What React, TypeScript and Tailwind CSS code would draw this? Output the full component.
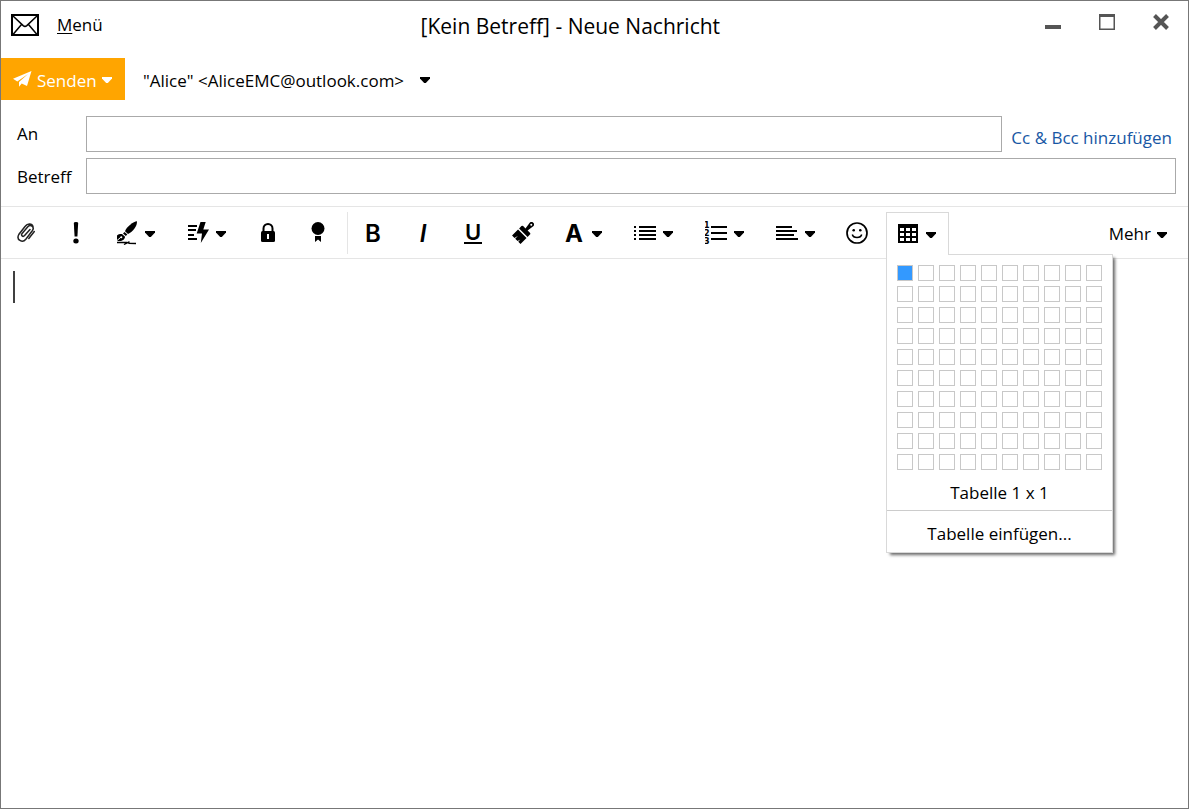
import { useState } from "react";
import type { ReactNode } from "react";

const GRID_SIZE = 10;

function Caret() {
	return (
		<svg width="10" height="6" viewBox="0 0 10 6" fill="currentColor" className="mt-0.5 shrink-0">
			<path d="M0 0h10v1.4L5.8 6H4.2L0 1.4z" />
		</svg>
	);
}

function MailIcon() {
	return (
		<svg width="28" height="22" viewBox="0 0 28 22" fill="none" stroke="currentColor">
			<rect x="1" y="1" width="26" height="20" strokeWidth="2" />
			<path d="M2 2l10.2 9.6q1.8 1.6 3.6 0L26 2M2 20.500l8.500-10M26 20.500l-8.500-10" strokeWidth="1.500" />
		</svg>
	);
}

function SendIcon() {
	return (
		<svg width="19" height="16" viewBox="0 0 19 16" fill="currentColor">
			<path d="M18.500 0L0 7.800l4.300 2.700L15 3 6 11v4.800l2.700-3.300 5.300 2.500z" />
		</svg>
	);
}

function ClipIcon() {
	return (
		<svg width="20" height="22" viewBox="0 0 20 22" fill="none" stroke="#222" strokeWidth="1.500" strokeLinecap="round">
			<path d="M14 7.500l-5.400 6c-1.800 2-4-.2-2.500-2l5.700-6.800c2.700-3 7.200.2 4.500 4l-6.500 8.500c-3.300 4.100-9.900.8-7-4.700L9.200 4.200C11.500 1 16 1.300 17 4.500" />
			<path d="M18.300 9.500l-5.500 7" />
		</svg>
	);
}

function PriorityIcon() {
	return (
		<svg width="8" height="22" viewBox="0 0 8 22" fill="currentColor">
			<path d="M1.800 1Q1.800 0 4 0t2.200 1L5.400 14.500H2.600z" />
			<ellipse cx="4" cy="19" rx="2.700" ry="2.500" />
		</svg>
	);
}

function SignatureIcon() {
	return (
		<svg width="22" height="24" viewBox="0 0 22 24" fill="currentColor">
			<path d="M21 .3C17.500.3 10.500 6 9 10.200l3 2.800C17 11 21.300 5 21 .3z" />
			<path d="M8.500 11l2.800 2.600-1.500 1.500L7 12.500z" />
			<path d="M6.300 13.200l2.800 2.600c-.3 2-1.800 3.700-4 4.200H1v-5.500c1.500-1.100 3.300-1.600 5.300-1.300z" />
			<path d="M1 19.500l3.800-3.200" stroke="#fff" strokeWidth="1" />
			<circle cx="5.300" cy="16.300" r="1" fill="#fff" />
			<path d="M1 21.500h9l-.8 1.300 3.600-1.800.2 1.300 7 .2" fill="none" stroke="currentColor" strokeWidth="1.400" />
		</svg>
	);
}

function TemplateIcon() {
	return (
		<svg width="22" height="22" viewBox="0 0 22 22" fill="currentColor">
			<path d="M1 3h9v2H1zM1 7h8v2H1zM1 12h6v2H1zM1 16h9v2H1z" />
			<path d="M13.500 0h5.200l-2.400 7.500H22L13.800 21l1.200-9.500H9.700z" />
		</svg>
	);
}

function LockIcon() {
	return (
		<svg width="14" height="19" viewBox="0 0 14 19">
			<path d="M2.500 9V5.500a4.500 4.500 0 0 1 9 0V9" fill="none" stroke="currentColor" strokeWidth="2" />
			<rect y="8" width="14" height="11" rx="1.500" fill="currentColor" />
			<path d="M6 11h2v5H6z" fill="#fff" />
		</svg>
	);
}

function BadgeIcon() {
	return (
		<svg width="14" height="22" viewBox="0 0 14 22" fill="currentColor">
			<circle cx="7" cy="6.500" r="6.500" />
			<path d="M4 14h6v6l-3-2.500L4 20z" />
		</svg>
	);
}

function BrushIcon() {
	return (
		<svg width="22" height="22" viewBox="0 0 22 22">
			<g transform="rotate(45 11 11)" fill="currentColor">
				<path d="M8.500-1Q8.500-3.500 11-3.500t2.500 2.500L12.500 6h3.300q1.200 0 1.200 1.200v3.300H5V7.200Q5 6 6.200 6h3.300z" />
				<path d="M5 12h12v8.500h-3.200v-3l-1 3H9.500v-4l-1 4H5z" />
				<circle cx="11" cy="-.7" r="1" fill="#fff" />
			</g>
		</svg>
	);
}

function BulletListIcon() {
	return (
		<svg width="22" height="14" viewBox="0 0 22 14" fill="currentColor">
			<path d="M0 0h2v2H0zM0 4h2v2H0zM0 8h2v2H0zM0 12h2v2H0zM5 0h17v2H5zM5 4h17v2H5zM5 8h17v2H5zM5 12h17v2H5z" />
		</svg>
	);
}

function NumberedListIcon() {
	return (
		<svg width="22" height="24" viewBox="0 0 22 24" fill="currentColor">
			<g fontFamily="DejaVu Sans" fontWeight="bold" fontSize="8">
				<text x="-1" y="7">1</text>
				<text x="-1" y="15">2</text>
				<text x="-1" y="23">3</text>
			</g>
			<path d="M6 5h16v2H6zM6 11h16v2H6zM6 17h16v2H6z" />
		</svg>
	);
}

function AlignIcon() {
	return (
		<svg width="22" height="14" viewBox="0 0 22 14" fill="currentColor">
			<path d="M0 0h16v2H0zM0 4h21v2H0zM0 8h18v2H0zM0 12h22v2H0z" />
		</svg>
	);
}

function SmileIcon() {
	return (
		<svg width="22" height="22" viewBox="0 0 22 22">
			<circle cx="11" cy="11" r="10" fill="none" stroke="currentColor" strokeWidth="1.700" />
			<circle cx="7.700" cy="8.300" r="1.300" />
			<circle cx="14.300" cy="8.300" r="1.300" />
			<path d="M6.300 12.500c1 4 8.400 4 9.400 0" fill="none" stroke="currentColor" strokeWidth="1.500" />
		</svg>
	);
}

function TableIcon() {
	return (
		<svg width="20" height="19" viewBox="0 0 20 19" fill="currentColor">
			<path
				fillRule="evenodd"
				d="M0 0h20v19H0zM2 4v3h4V4zM8 4v3h4V4zM14 4v3h4V4zM2 9v3h4V9zM8 9v3h4V9zM14 9v3h4V9zM2 14v3h4v-3zM8 14v3h4v-3zM14 14v3h4v-3z"
			/>
		</svg>
	);
}

function ToolButton({ label, children }: { label: string; children: ReactNode }) {
	return (
		<button
			type="button"
			aria-label={label}
			className="flex h-[51px] w-[50px] shrink-0 items-center justify-center hover:bg-neutral-100"
		>
			{children}
		</button>
	);
}

function ToolMenuButton({ label, children }: { label: string; children: ReactNode }) {
	return (
		<button
			type="button"
			aria-label={label}
			aria-haspopup="menu"
			className="flex h-[51px] w-[71px] shrink-0 items-center gap-[7px] pl-[15px] hover:bg-neutral-100"
		>
			<span className="flex w-[22px] justify-center">{children}</span>
			<Caret />
		</button>
	);
}

function TablePicker() {
	const [size, setSize] = useState({ rows: 1, cols: 1 });
	const cells = Array.from({ length: GRID_SIZE * GRID_SIZE }, (_, i) => ({
		row: Math.floor(i / GRID_SIZE) + 1,
		col: (i % GRID_SIZE) + 1,
	}));

	return (
		<div className="absolute left-0 top-[42px] w-[227px] border border-[#d9d9d9] bg-white shadow-[3px_3px_3px_-1px_rgba(0,0,0,0.6)]">
			<div className="grid grid-cols-10 gap-[5px] px-2.5 pt-2.5">
				{cells.map(({ row, col }) => (
					<button
						key={`${row}-${col}`}
						type="button"
						aria-label={`${row} x ${col}`}
						onMouseEnter={() => setSize({ rows: row, cols: col })}
						className={`size-4 border border-[#c8c8c8] ${
							row <= size.rows && col <= size.cols ? "bg-[#3399ff]" : "bg-white"
						}`}
					/>
				))}
			</div>
			<p className="pb-[5px] pt-[11px] text-center leading-6">
				Tabelle {size.cols} x {size.rows}
			</p>
			<button
				type="button"
				className="block w-full border-t border-[#ccc] pb-[6px] pt-[11px] text-center leading-6 hover:bg-neutral-100"
			>
				Tabelle einfügen...
			</button>
		</div>
	);
}

function TitleBar() {
	return (
		<header className="flex h-[57px] shrink-0">
			<div className="flex items-start gap-[18px] pl-2.5 pr-3">
				<span className="mt-[13px]">
					<MailIcon />
				</span>
				<button type="button" className="mt-3 leading-6">
					<span className="underline underline-offset-2">M</span>enü
				</button>
			</div>
			<h1 className="mt-[9px] flex-1 text-center text-[21px] leading-8">
				[Kein Betreff] - Neue Nachricht
			</h1>
			<div className="flex h-[42px] text-[#555]">
				<button type="button" aria-label="Minimieren" className="flex w-[54px] items-center justify-center">
					<svg width="16" height="16" viewBox="0 0 16 16" fill="currentColor">
						<path d="M0 11h16v4H0z" />
					</svg>
				</button>
				<button type="button" aria-label="Maximieren" className="flex w-[54px] items-center justify-center">
					<svg width="16" height="16" viewBox="0 0 16 16" fill="currentColor">
						<path fillRule="evenodd" d="M0 0h16v16H0zM1.500 3v11.500h13V3z" />
					</svg>
				</button>
				<button type="button" aria-label="Schließen" className="flex w-[54px] items-center justify-center">
					<svg width="16" height="16" viewBox="0 0 16 16" fill="none" stroke="currentColor" strokeWidth="4">
						<path d="M1.500 1.500l13 13M14.500 1.500l-13 13" />
					</svg>
				</button>
			</div>
		</header>
	);
}

function Toolbar() {
	return (
		<div className="flex h-[53px] shrink-0 border-y border-[#e5e5e5]">
			<ToolButton label="Anhang">
				<ClipIcon />
			</ToolButton>
			<ToolButton label="Priorität">
				<PriorityIcon />
			</ToolButton>
			<ToolMenuButton label="Signatur">
				<SignatureIcon />
			</ToolMenuButton>
			<ToolMenuButton label="Schnelltext">
				<TemplateIcon />
			</ToolMenuButton>
			<ToolButton label="Verschlüsseln">
				<LockIcon />
			</ToolButton>
			<ToolButton label="Signieren">
				<BadgeIcon />
			</ToolButton>
			<span className="ml-1 mt-[5px] h-[42px] w-px bg-[#e5e5e5]" />
			<ToolButton label="Fett">
				<span className="pt-0.5 font-['Inter',sans-serif] text-2xl font-semibold leading-6">B</span>
			</ToolButton>
			<ToolButton label="Kursiv">
				<span className="pt-0.5 font-['Inter',sans-serif] text-2xl font-semibold italic leading-6">I</span>
			</ToolButton>
			<ToolButton label="Unterstrichen">
				<span className="border-b-2 border-black px-px font-['Inter',sans-serif] text-[22px] font-semibold leading-5">
					U
				</span>
			</ToolButton>
			<ToolButton label="Format übertragen">
				<BrushIcon />
			</ToolButton>
			<ToolMenuButton label="Schrift">
				<span className="pt-0.5 font-['Inter',sans-serif] text-2xl font-bold leading-6">A</span>
			</ToolMenuButton>
			<ToolMenuButton label="Aufzählung">
				<BulletListIcon />
			</ToolMenuButton>
			<ToolMenuButton label="Nummerierung">
				<NumberedListIcon />
			</ToolMenuButton>
			<ToolMenuButton label="Ausrichtung">
				<AlignIcon />
			</ToolMenuButton>
			<ToolButton label="Emoji">
				<SmileIcon />
			</ToolButton>
			<div className="relative z-10 ml-1 mt-[5px]">
				<TablePicker />
				<button
					type="button"
					aria-label="Tabelle"
					aria-expanded="true"
					className="relative flex h-[43px] w-[63px] items-center gap-2 border-x border-t border-[#d9d9d9] bg-white pb-px pl-[11px]"
				>
					<TableIcon />
					<Caret />
				</button>
			</div>
			<button type="button" className="ml-auto mr-[21px] flex items-center gap-1.5 pt-[3px]">
				Mehr
				<Caret />
			</button>
		</div>
	);
}

export default function App() {
	return (
		<div className="flex min-h-screen flex-col border border-[#777] bg-white font-['Open_Sans','Noto_Sans',sans-serif] text-[17px] text-black">
			<TitleBar />

			<div className="flex items-center">
				<button
					type="button"
					className="flex h-[42px] w-[124px] items-center gap-[5px] bg-[#ffa500] pl-3 text-white"
				>
					<SendIcon />
					<span className="mt-1">Senden</span>
					<Caret />
				</button>
				<label className="ml-[18px] flex items-center gap-4">
					<select
						aria-label="Absender"
						className="mt-1 appearance-none bg-transparent leading-6 outline-none [field-sizing:content]"
					>
						<option>"Alice" &lt;AliceEMC@outlook.com&gt;</option>
					</select>
					<Caret />
				</label>
			</div>

			<div className="mt-4 flex flex-col gap-1.5 pb-3 pl-4">
				<div className="flex items-center">
					<label htmlFor="to" className="w-[69px]">
						An
					</label>
					<input id="to" type="text" className="h-9 min-w-0 flex-1 border border-[#aaa] px-2 outline-none" />
					<a href="#cc" className="ml-[9px] mr-4 mt-2 text-[#1857a4]">
						Cc &amp; Bcc hinzufügen
					</a>
				</div>
				<div className="flex items-center pr-3">
					<label htmlFor="subject" className="w-[69px] pt-0.5">
						Betreff
					</label>
					<input id="subject" type="text" className="h-9 min-w-0 flex-1 border border-[#aaa] px-2 outline-none" />
				</div>
			</div>

			<Toolbar />

			<main className="flex flex-1 pl-3 pt-3">
				<span className="h-8 w-0.5 bg-neutral-700" />
				<textarea aria-label="Nachricht" className="flex-1 resize-none px-1 caret-transparent outline-none" />
			</main>
		</div>
	);
}
